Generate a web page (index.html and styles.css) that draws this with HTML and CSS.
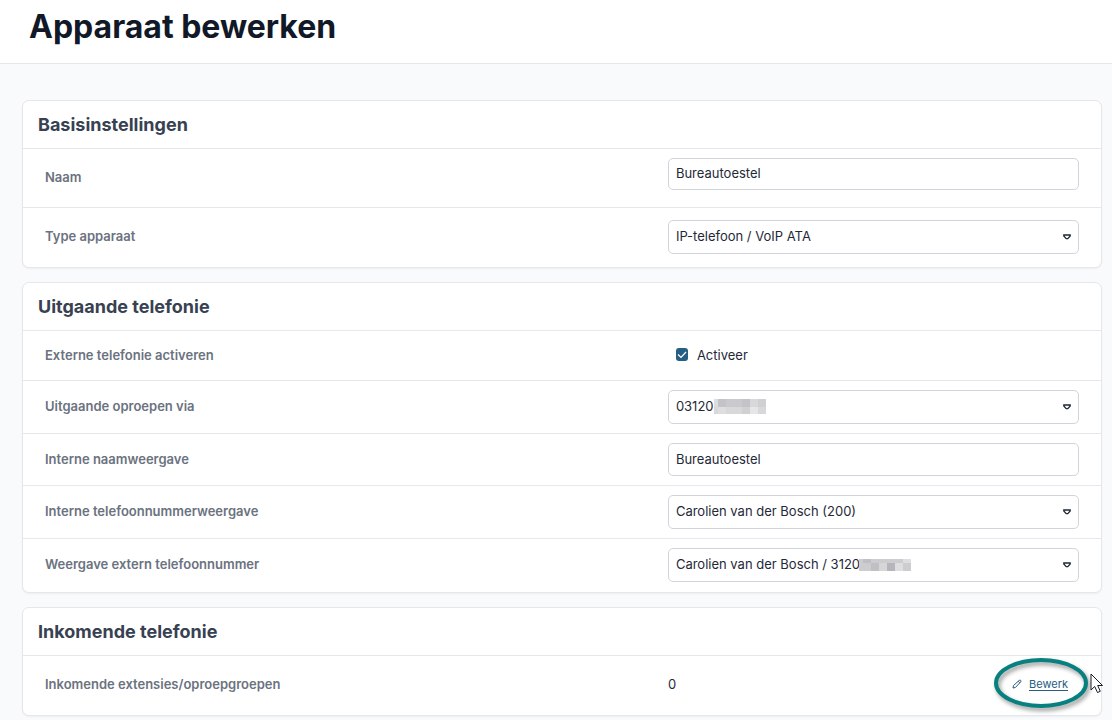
FILE: index.html
```
<!DOCTYPE html>
<html lang="nl">
<head>
  <meta charset="UTF-8" />
  <meta name="viewport" content="width=device-width, initial-scale=1.0"/>
  <title>Apparaat bewerken</title>
  <link rel="stylesheet" href="styles.css">
</head>
<body>

  <header class="page-header">
    <h1>Apparaat bewerken</h1>
  </header>

  <main class="content">
    <section class="card">
      <h2>Basisinstellingen</h2>
      <div class="row row-tall">
        <label for="naam">Naam</label>
        <input class="field field-first" type="text" id="naam" value="Bureautoestel">
      </div>
      <div class="row row-tall">
        <label for="type">Type apparaat</label>
        <div class="select">
          <select class="field" id="type"><option>IP-telefoon / VoIP ATA</option></select>
          <svg class="caret" viewBox="0 0 8 6"><path d="M.8 1h6.4v1L4.8 4.6H3.200L.8 2z"/></svg>
        </div>
      </div>
    </section>

    <section class="card">
      <h2>Uitgaande telefonie</h2>
      <div class="row row-check">
        <span class="label">Externe telefonie activeren</span>
        <label class="check"><input type="checkbox" checked>Activeer</label>
      </div>
      <div class="row">
        <label for="via">Uitgaande oproepen via</label>
        <div class="select">
          <select class="field" id="via"><option>03120</option></select>
          <svg class="mask mask-via" viewBox="0 0 52 15" shape-rendering="crispEdges">
            <path fill="#d8d8da" d="M0 0h52v15H0z"/>
            <path fill="#c4c4c8" d="M4 0h8v8H4zM28 0h8v8h-8z"/>
            <path fill="#cacacd" d="M12 0h16v8H12z"/>
            <path fill="#dedee0" d="M0 0h4v8H0zM4 8h8v7H4z"/>
            <path fill="#d0d0d3" d="M28 8h8v7h-8zM44 0h8v8h-8z"/>
            <path fill="#e6e6e8" d="M36 8h8v7h-8z"/>
          </svg>
          <svg class="caret" viewBox="0 0 8 6"><path d="M.8 1h6.4v1L4.8 4.6H3.200L.8 2z"/></svg>
        </div>
      </div>
      <div class="row">
        <label for="weergave">Interne naamweergave</label>
        <input class="field field-text" type="text" id="weergave" value="Bureautoestel">
      </div>
      <div class="row">
        <label for="intern">Interne telefoonnummerweergave</label>
        <div class="select">
          <select class="field" id="intern"><option>Carolien van der Bosch (200)</option></select>
          <svg class="caret" viewBox="0 0 8 6"><path d="M.8 1h6.4v1L4.8 4.6H3.200L.8 2z"/></svg>
        </div>
      </div>
      <div class="row">
        <label for="extern">Weergave extern telefoonnummer</label>
        <div class="select">
          <select class="field" id="extern"><option>Carolien van der Bosch / 3120</option></select>
          <svg class="mask mask-extern" viewBox="0 0 52 12" shape-rendering="crispEdges">
            <path fill="#cdcdd0" d="M0 0h52v12H0z"/>
            <path fill="#bfbfc4" d="M4 0h8v4H4zM12 4h8v8h-8z"/>
            <path fill="#b5b5bb" d="M28 4h8v8h-8z"/>
            <path fill="#d6d6d8" d="M20 4h8v8h-8z"/>
            <path fill="#dededf" d="M36 4h8v8h-8zM44 0h8v4h-8z"/>
          </svg>
          <svg class="caret" viewBox="0 0 8 6"><path d="M.8 1h6.4v1L4.8 4.6H3.200L.8 2z"/></svg>
        </div>
      </div>
    </section>

    <section class="card">
      <h2>Inkomende telefonie</h2>
      <div class="row row-tall">
        <span class="label">Inkomende extensies/oproepgroepen</span>
        <div class="summary">
          <span>0</span>
          <div class="action">
            <a href="#">
              <svg class="pencil" viewBox="0 0 10 10"><path d="M1 9l.5-2.500L7.200 1.400Q8 .7 8.700 1.400Q9.400 2.100 8.700 2.900L3.400 8.500zM6.200 2.300l1.600 1.600"/></svg><span>Bewerk</span>
            </a>
            <svg class="ring" viewBox="0 0 104 60"><ellipse cx="51" cy="28" rx="45" ry="23"/></svg>
            <svg class="pointer" viewBox="0 0 14 22"><path d="M1 1v16l3.700-3.500L7.500 19.500l2.800-1.200L7.700 12.500H12.500z"/></svg>
          </div>
        </div>
      </div>
    </section>
  </main>

</body>
</html>
```

FILE: styles.css
```
* {
  box-sizing: border-box;
}
body {
  margin: 0;
  font-family: Inter, "Liberation Sans", sans-serif;
  font-size: 13px;
  line-height: 20px;
  color: #1f2937;
  background: #f9fafb;
}
.page-header {
  background: #fff;
  border-bottom: 1px solid #e5e7eb;
  padding: 7px 29px 16px;
}
h1 {
  margin: 0;
  font-size: 32px;
  line-height: 40px;
  font-weight: 700;
  color: #111827;
}
.content {
  display: flex;
  flex-direction: column;
  gap: 14px;
  padding: 36px 10px 5px 22px;
}
.card {
  padding-bottom: 1px;
  background: #fff;
  border: 1px solid #e5e7eb;
  border-radius: 7px;
  box-shadow: 0 1px 2px rgba(0,0,0,0.05);
}
h2 {
  margin: 0;
  padding: 12px 15px 11px;
  font-size: 18px;
  line-height: 24px;
  font-weight: 700;
  color: #374151;
}
.row {
  display: grid;
  grid-template-columns: 50fr 33fr;
  align-items: center;
  padding: 9px 22px;
  border-top: 1px solid #e5e7eb;
}
.row-tall {
  min-height: 59px;
}
.row-check {
  min-height: 50px;
}
.row > label,
.label,
.summary {
  padding-bottom: 2px;
}
.row > label:first-child,
.label {
  font-weight: 600;
  color: #6b7280;
}
.field {
  display: block;
  width: 100%;
  height: 34px;
  margin: 0;
  padding: 0 7px 2px;
  font: inherit;
  color: #1f2937;
  background: #fff;
  border: 1px solid #d1d5db;
  border-radius: 5px;
  appearance: none;
}
.field-text {
  height: 33px;
}
.field-first {
  height: 32px;
  margin-bottom: 8px;
}
.select {
  position: relative;
}
.caret {
  position: absolute;
  right: 8px;
  top: 14px;
  width: 8px;
  height: 6px;
  fill: none;
  stroke: #1f2937;
  stroke-width: 1.300;
  pointer-events: none;
}
.mask {
  position: absolute;
  width: 52px;
}
.mask-via {
  left: 46px;
  top: 9px;
  height: 15px;
}
.mask-extern {
  left: 191px;
  top: 11px;
  height: 12px;
}
.check {
  display: flex;
  align-items: center;
  gap: 9px;
  padding-left: 8px;
}
.check input {
  width: 12px;
  height: 13px;
  margin: 0;
  appearance: none;
  border-radius: 3px;
  background: #255d83 url("data:image/svg+xml,%3Csvg xmlns='http://www.w3.org/2000/svg' viewBox='0 0 12 13'%3E%3Cpath d='M2 6.500l3 3 5-5.500' fill='none' stroke='white' stroke-width='1.200'/%3E%3C/svg%3E");
}
.summary {
  display: flex;
  justify-content: space-between;
  align-items: center;
}
.action {
  position: relative;
  padding-right: 11px;
}
.action a {
  display: flex;
  align-items: center;
  gap: 7px;
  font-size: 11px;
  color: #255d83;
  text-decoration: none;
}
.action a span {
  text-decoration: underline;
  text-underline-offset: 2px;
}
.pencil {
  width: 10px;
  height: 10px;
  fill: none;
  stroke: #255d83;
}
.ring {
  position: absolute;
  right: -15px;
  top: -19px;
  width: 104px;
  height: 60px;
  fill: none;
  stroke: #088080;
  stroke-width: 4;
  filter: drop-shadow(2px 3px 2px rgba(0,0,0,0.4));
  pointer-events: none;
}
.pointer {
  position: absolute;
  right: -25px;
  top: -1px;
  width: 14px;
  height: 22px;
  fill: #fff;
  stroke: #1b1b25;
  pointer-events: none;
}
```
